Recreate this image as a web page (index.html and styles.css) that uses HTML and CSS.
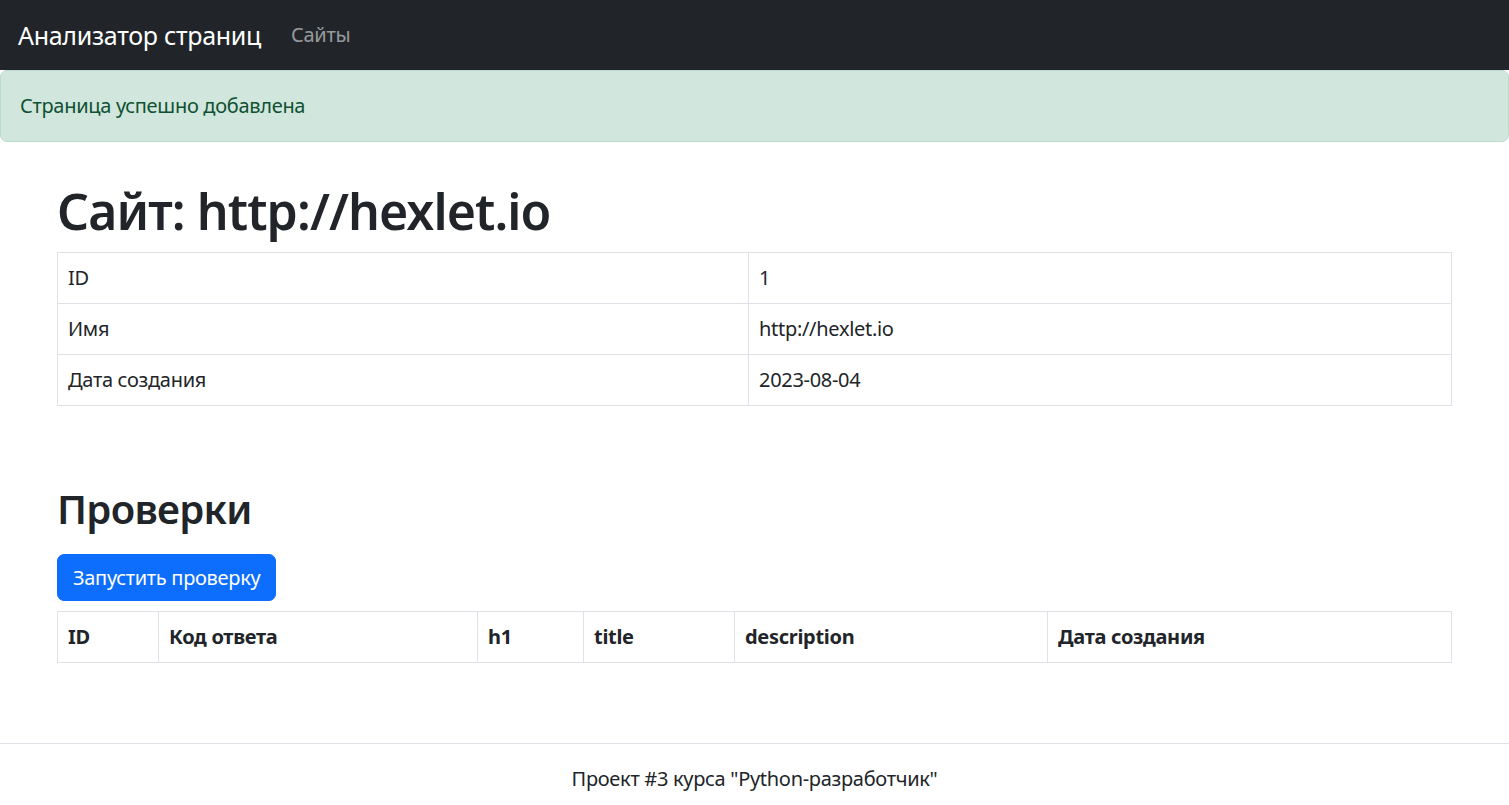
FILE: index.html
```html
<!DOCTYPE html>
<html lang="ru">
<head>
<meta charset="utf-8">
<title>Анализатор страниц</title>
<link rel="stylesheet" href="styles.css">
</head>
<body>
<header class="navbar">
  <a class="brand" href="#">Анализатор страниц</a>
  <nav class="nav">
    <a class="nav-link" href="#">Сайты</a>
  </nav>
</header>
<div class="alert">Страница успешно добавлена</div>
<main class="container">
  <h1 class="title">Сайт: http://hexlet.io</h1>
  <table class="table">
    <tbody>
      <tr><td class="c-key">ID</td><td>1</td></tr>
      <tr><td class="c-key">Имя</td><td>http://hexlet.io</td></tr>
      <tr><td class="c-key">Дата создания</td><td>2023-08-04</td></tr>
    </tbody>
  </table>
  <h2 class="subtitle">Проверки</h2>
  <form class="check-form">
    <button type="button" class="btn">Запустить проверку</button>
  </form>
  <table class="table table-head">
    <thead>
      <tr>
        <th class="w-id">ID</th>
        <th class="w-code">Код ответа</th>
        <th class="w-h1">h1</th>
        <th class="w-title">title</th>
        <th class="w-desc">description</th>
        <th class="w-date">Дата создания</th>
      </tr>
    </thead>
  </table>
</main>
<footer class="footer">Проект #3 курса "Python-разработчик"</footer>
</body>
</html>
```
FILE: styles.css
```css
* { box-sizing: border-box; }
html, body { margin: 0; padding: 0; }
body {
  font-family: "Noto Sans", "Open Sans", "DejaVu Sans", sans-serif;
  font-size: 20px;
  line-height: 30px;
  letter-spacing: -0.3px;
  color: #212529;
  background: #fff;
}
a { text-decoration: none; }

.navbar {
  height: 70px;
  background: #212529;
  display: flex;
  align-items: center;
  padding: 0 15px 0 18px;
}
.brand {
  font-size: 25px;
  line-height: 37px;
  color: #fff;
  margin-right: 20px;
}
.nav { display: flex; }
.nav-link {
  color: rgba(255,255,255,.55);
  padding: 0 10px;
  font-size: 20px;
}

.alert {
  background: #d1e7dd;
  border: 1px solid #badbcc;
  color: #0f5132;
  border-radius: 7px;
  padding: 20px 19px;
  margin-bottom: 20px;
}

.container {
  width: 1395px;
  margin: 0 auto;
  padding-top: 19px;
}
.title {
  font-size: 50px;
  line-height: 60px;
  font-weight: 600;
  letter-spacing: -0.9px;
  margin: 0 0 11px;
}
.subtitle {
  font-size: 40px;
  line-height: 48px;
  font-weight: 600;
  letter-spacing: -0.7px;
  margin: 79px 0 21px;
}
.table {
  width: 100%;
  border-collapse: collapse;
  margin-bottom: 20px;
}
.table td, .table th {
  border: 1px solid #dee2e6;
  padding: 10px 10px;
  text-align: left;
  vertical-align: top;
}
.table th { font-weight: 700; }
.c-key { width: 691px; }
.check-form { margin: 0 0 10px; }
.btn {
  display: block;
  font-family: inherit;
  font-size: 20px;
  line-height: 30px;
  letter-spacing: -0.3px;
  color: #fff;
  background: #0d6efd;
  border: 1px solid #0d6efd;
  border-radius: 7px;
  padding: 7.5px 15px;
  cursor: pointer;
}
.w-id { width: 101px; }
.w-code { width: 319px; }
.w-h1 { width: 106px; }
.w-title { width: 151px; }
.w-desc { width: 313px; }
.w-date { width: 404px; }

.footer {
  margin-top: 80px;
  border-top: 1px solid #dee2e6;
  padding: 20px 0;
  text-align: center;
}
```
